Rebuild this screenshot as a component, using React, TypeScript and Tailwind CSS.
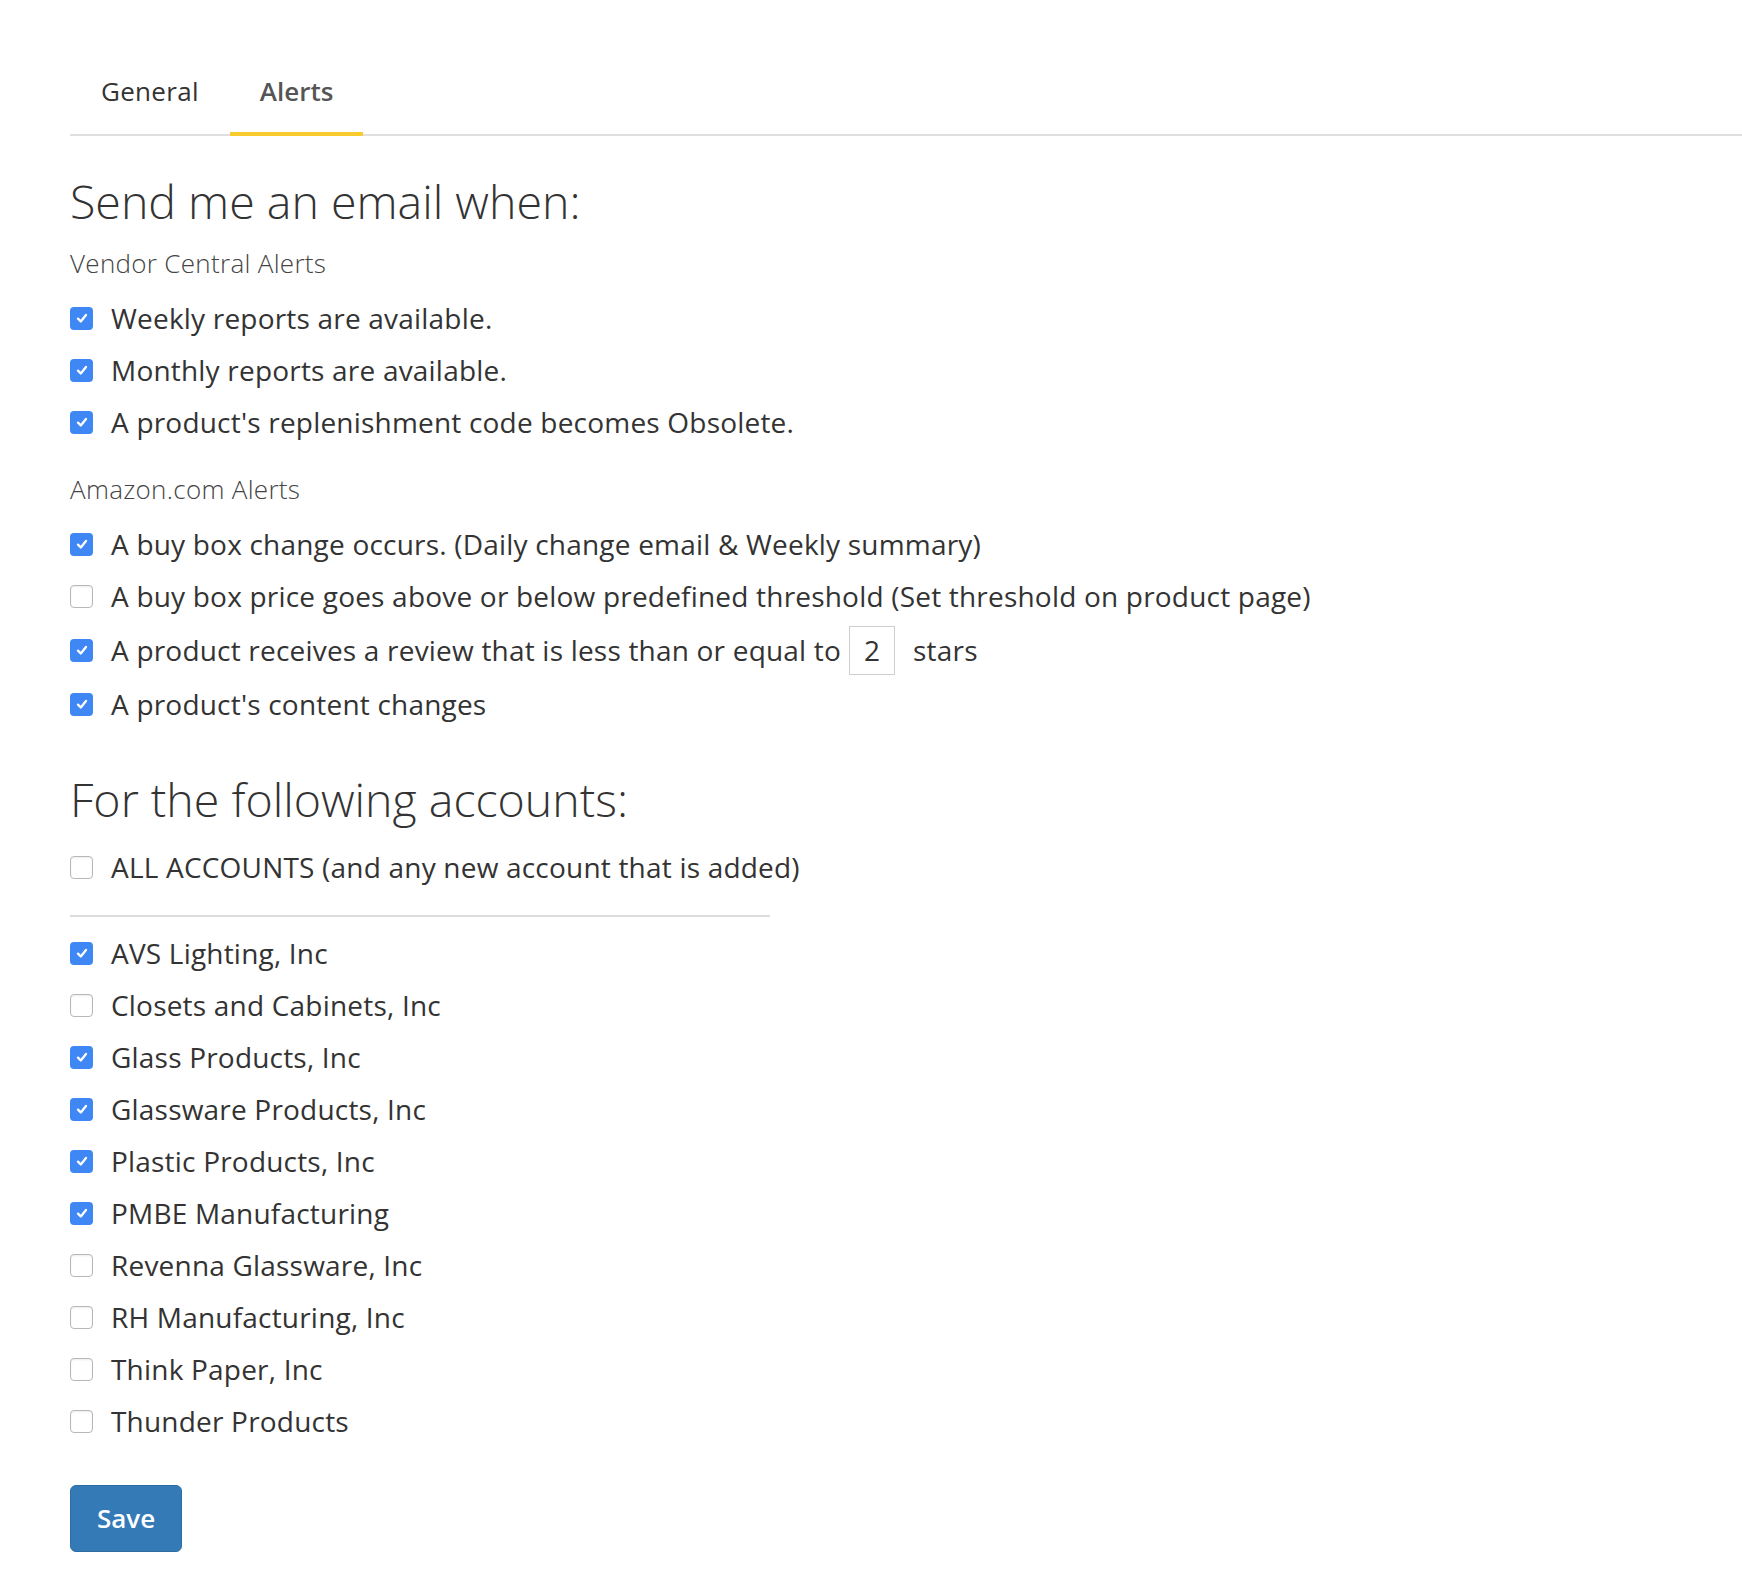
import { useState } from "react";

type Item = { label: string; checked: boolean };

const vendorAlerts: Item[] = [
  { label: "Weekly reports are available.", checked: true },
  { label: "Monthly reports are available.", checked: true },
  { label: "A product's replenishment code becomes Obsolete.", checked: true },
];

const accounts: Item[] = [
  { label: "AVS Lighting, Inc", checked: true },
  { label: "Closets and Cabinets, Inc", checked: false },
  { label: "Glass Products, Inc", checked: true },
  { label: "Glassware Products, Inc", checked: true },
  { label: "Plastic Products, Inc", checked: true },
  { label: "PMBE Manufacturing", checked: true },
  { label: "Revenna Glassware, Inc", checked: false },
  { label: "RH Manufacturing, Inc", checked: false },
  { label: "Think Paper, Inc", checked: false },
  { label: "Thunder Products", checked: false },
];

function Box({ checked }: { checked: boolean }) {
  if (checked) {
    return (
      <span className="flex h-[23px] w-[23px] shrink-0 items-center justify-center rounded-[4px] bg-[#3f87f5]">
        <svg viewBox="0 0 16 16" className="h-[16px] w-[16px]" fill="none">
          <path d="M4 8.6l2.8 2.9L12 5" stroke="white" strokeWidth="2.3" strokeLinecap="round" strokeLinejoin="round" />
        </svg>
      </span>
    );
  }
  return (
    <span className="h-[23px] w-[23px] shrink-0 rounded-[4px] border border-[#b8b8b8] bg-white shadow-[inset_0_1px_2px_rgba(0,0,0,0.08)]" />
  );
}

function Row({ checked, children, tall }: { checked: boolean; children: React.ReactNode; tall?: boolean }) {
  return (
    <label className={`flex items-center gap-[18px] ${tall ? "h-[56px]" : "h-[52px]"}`}>
      <Box checked={checked} />
      <span className="text-[28px] tracking-[0.2px] text-[#333]">{children}</span>
    </label>
  );
}

export default function App() {
  const [tab] = useState("alerts");

  return (
    <div className="min-h-screen bg-white pt-[50px] text-[#333]" style={{ fontFamily: "'Open Sans', Lato, sans-serif" }}>
      {/* Faner */}
      <div className="ml-[70px] flex h-[86px] border-b-2 border-[#e0e0e0]">
        <div className="-mb-[2px] flex h-[86px] items-center border-b-4 border-transparent px-[31px] text-[26px] tracking-[0.3px] text-[#333]">
          General
        </div>
        <div
          className={`-mb-[2px] flex h-[86px] items-center border-b-4 px-[30px] text-[26px] font-semibold text-[#555] ${
            tab === "alerts" ? "border-[#f8cc2e]" : "border-transparent"
          }`}
        >
          Alerts
        </div>
      </div>

      <div className="pl-[70px]">
        <h1 className="mt-[37px] text-[46.5px] leading-[56px] font-light text-[#333]">Send me an email when:</h1>
        <div className="mt-[18px] text-[26px] leading-[32px] tracking-[0.3px] font-light text-[#444]">
          Vendor Central Alerts
        </div>

        <div className="mt-[13px]">
          {vendorAlerts.map((a) => (
            <Row key={a.label} checked={a.checked}>
              {a.label}
            </Row>
          ))}
        </div>

        <div className="mt-[25px] text-[26px] leading-[32px] tracking-[0.3px] font-light text-[#444]">
          Amazon.com Alerts
        </div>

        <div className="mt-[13px]">
          <Row checked>A buy box change occurs. (Daily change email &amp; Weekly summary)</Row>
          <Row checked={false}>
            A buy box price goes above or below predefined threshold (Set threshold on product page)
          </Row>
          <Row checked tall>
            <span className="flex items-center">
              A product receives a review that is less than or equal to
              <span className="mr-[18px] ml-[8px] flex h-[49px] w-[46px] items-center justify-center border border-[#cfcfcf] text-[28px]">
                2
              </span>
              stars
            </span>
          </Row>
          <Row checked>A product's content changes</Row>
        </div>

        <h2 className="mt-[41px] text-[46.5px] leading-[56px] font-light text-[#333]">For the following accounts:</h2>

        <div className="mt-[14px]">
          <Row checked={false}>ALL ACCOUNTS (and any new account that is added)</Row>
        </div>

        <div className="mt-[22px] h-[2px] w-[700px] bg-[#dcdcdc]" />

        <div className="mt-[10px]">
          {accounts.map((a) => (
            <Row key={a.label} checked={a.checked}>
              {a.label}
            </Row>
          ))}
        </div>

        <button
          type="button"
          className="mt-[38px] mb-[40px] h-[67px] w-[112px] rounded-[6px] border border-[#2e6da4] bg-[#337ab7] text-[26px] font-semibold text-white"
        >
          Save
        </button>
      </div>
    </div>
  );
}
